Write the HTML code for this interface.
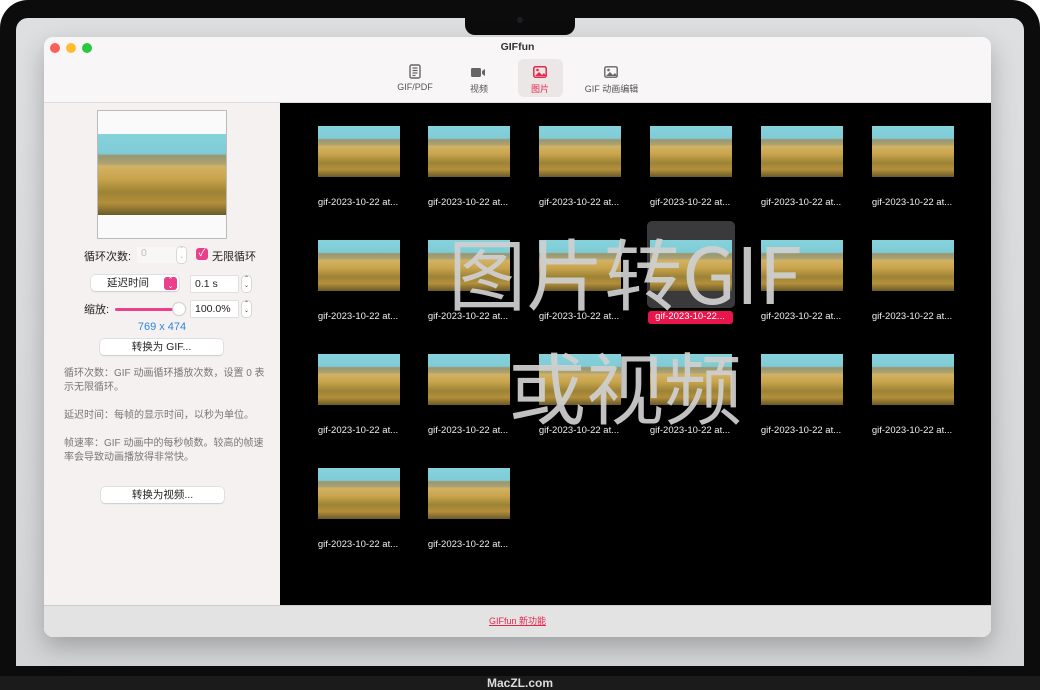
<!DOCTYPE html>
<html><head><meta charset="utf-8"><style>
*{margin:0;padding:0;box-sizing:border-box}
body{width:1040px;height:690px;overflow:hidden;background:#fff;font-family:"Liberation Sans","Noto Sans CJK SC",sans-serif;position:relative}
.a{position:absolute}
.th{position:absolute;width:82px;height:51px;background:linear-gradient(180deg,#86d3dc 0,#7fcbd6 24%,#9a9670 27%,#a9a273 36%,#d2b264 40%,#c9a44c 55%,#9c8336 72%,#b48f3a 85%,#6a5a2a 100%)}
.lb{position:absolute;width:100px;text-align:center;color:#eee;font-size:9.5px}
.btn{position:absolute;background:#fff;border-radius:4px;box-shadow:0 0 0 .5px #ccc,0 1px 1px #ccc;font-size:10.5px;text-align:center;color:#222}
.fld{position:absolute;background:#fff;box-shadow:0 0 0 .5px #ccc;font-size:10.5px;color:#222;padding-left:4px}
.stp{position:absolute;width:9px;height:16px;border-radius:3px;background:#fff;box-shadow:0 0 0 .5px #bbb;font-size:6px;line-height:7px;text-align:center;color:#333}
.big{position:absolute;text-align:center;font-size:78px;line-height:90px;color:#d0d0d0;font-family:'Noto Sans CJK SC',sans-serif;font-weight:400;opacity:.93}
</style></head><body>
<div class="a" style="left:0;top:0;width:1040px;height:690px;background:#0c0c0c;border-radius:28px 28px 0 0"></div>
<div class="a" style="left:16px;top:18px;width:1008px;height:648px;background:linear-gradient(#dedfe1,#d4d5d7);border-radius:12px 12px 0 0"></div>
<div class="a" style="left:465px;top:10px;width:110px;height:25px;background:#0c0c0c;border-radius:0 0 10px 10px"></div>
<div class="a" style="left:517px;top:17px;width:6px;height:6px;border-radius:50%;background:#1d1d25"></div>
<div class="a" style="left:0;top:676px;width:1040px;height:14px;background:#1b1b1b;color:#ddd;font-size:12px;text-align:center;line-height:14px;font-weight:bold">MacZL.com</div>
<!-- window -->
<div class="a" style="left:44px;top:37px;width:947px;height:600px;background:#f8f6f6;border-radius:9px;box-shadow:0 10px 25px rgba(0,0,0,.25);overflow:hidden">
 <div class="a" style="left:6px;top:6px;width:10px;height:10px;border-radius:50%;background:#fe5f57"></div>
 <div class="a" style="left:22px;top:6px;width:10px;height:10px;border-radius:50%;background:#febc2e"></div>
 <div class="a" style="left:38px;top:6px;width:10px;height:10px;border-radius:50%;background:#28c840"></div>
 <div class="a" style="left:0;top:4px;width:947px;text-align:center;font-size:10.5px;font-weight:bold;color:#333">GIFfun</div>
 <div class="a" style="left:474px;top:22px;width:45px;height:38px;background:#ebe7e7;border-radius:6px"></div>
 <svg class="a" style="left:365px;top:27px" width="12" height="15"><rect x="1" y="1" width="10" height="13" rx="1.5" fill="none" stroke="#666" stroke-width="1.4"/><path d="M3.5 4h5M3.5 6.5h5M3.5 9h5M3.5 11.5h3" stroke="#666" stroke-width="1.2"/></svg>
 <svg class="a" style="left:427px;top:30px" width="15" height="11"><rect x="0" y="1" width="10" height="9" rx="1.5" fill="#666"/><path d="M11 4l3-2v7l-3-2z" fill="#666"/></svg>
 <svg class="a" style="left:489px;top:29px" width="14" height="12"><rect x="0.8" y="0.8" width="12.4" height="10.4" rx="1.5" fill="none" stroke="#e8264d" stroke-width="1.5"/><path d="M2 10l4-4 3 3 2-2 2 3z" fill="#e8264d"/><circle cx="4.5" cy="4" r="1.3" fill="#e8264d"/></svg>
 <svg class="a" style="left:560px;top:29px" width="14" height="12"><rect x="0.8" y="0.8" width="12.4" height="10.4" rx="1.5" fill="none" stroke="#666" stroke-width="1.4"/><path d="M2 10l4-4 3 3 2-2 2 3z" fill="#666"/><circle cx="4.5" cy="4" r="1.3" fill="#666"/></svg>
 <div class="a" style="left:346px;top:45px;width:50px;text-align:center;font-size:9px;color:#555">GIF/PDF</div>
 <div class="a" style="left:415px;top:45px;width:40px;text-align:center;font-size:9px;color:#555">视频</div>
 <div class="a" style="left:476px;top:45px;width:40px;text-align:center;font-size:9px;color:#e8264d">图片</div>
 <div class="a" style="left:530px;top:45px;width:75px;text-align:center;font-size:9px;color:#555">GIF 动画编辑</div>
 <div class="a" style="left:0;top:65px;width:947px;height:1px;background:#ddd"></div>
 <div class="a" style="left:0;top:66px;width:236px;height:502px;background:#f5f1f1">
  <div class="a" style="left:53px;top:7px;width:130px;height:129px;border:1px solid #bbb;background:#fafafa"></div>
  <div class="th" style="left:54px;top:31px;width:128px;height:81px"></div>
  <div class="a" style="left:40px;top:145px;font-size:11px;color:#222">循环次数:</div>
  <div class="fld" style="left:93px;top:144px;width:40px;height:16px;color:#bbb;box-shadow:none;background:#f9f6f6">0</div>
  <div class="stp" style="left:133px;top:144px;color:#bbb">⌃<br>⌄</div>
  <div class="a" style="left:152px;top:145px;width:12px;height:12px;border-radius:3px;background:#ea3f8a;color:#fff;font-size:10px;line-height:12px;text-align:center">✓</div>
  <div class="a" style="left:168px;top:145px;font-size:11px;color:#222">无限循环</div>
  <div class="btn" style="left:47px;top:172px;width:88px;height:16px;line-height:16px;text-align:left;padding-left:16px">延迟时间</div>
  <div class="a" style="left:120px;top:174px;width:13px;height:13px;border-radius:3px;background:#ea3f8a;color:#fff;font-size:7px;line-height:6px;text-align:center;padding-top:1px">⌃<br>⌄</div>
  <div class="fld" style="left:147px;top:173px;width:47px;height:16px;line-height:16px">0.1 s</div>
  <div class="stp" style="left:198px;top:173px">⌃<br>⌄</div>
  <div class="a" style="left:40px;top:198px;font-size:11px;color:#222">缩放:</div>
  <div class="a" style="left:71px;top:205px;width:62px;height:3px;border-radius:2px;background:#ea3f8a"></div>
  <div class="a" style="left:129px;top:200px;width:12px;height:12px;border-radius:50%;background:#fff;box-shadow:0 0 1px 1px #ccc"></div>
  <div class="fld" style="left:147px;top:198px;width:47px;height:16px;line-height:16px">100.0%</div>
  <div class="stp" style="left:198px;top:198px">⌃<br>⌄</div>
  <div class="a" style="left:0;top:218px;width:236px;text-align:center;font-size:11px;color:#2a86e0">769 x 474</div>
  <div class="btn" style="left:56px;top:236px;width:123px;height:16px;line-height:16px">转换为 GIF...</div>
  <div class="a" style="left:20px;top:264px;width:208px;font-size:10px;line-height:14px;color:#777">循环次数：GIF 动画循环播放次数，设置 0 表示无限循环。<br><br>延迟时间：每帧的显示时间，以秒为单位。<br><br>帧速率：GIF 动画中的每秒帧数。较高的帧速率会导致动画播放得非常快。</div>
  <div class="btn" style="left:57px;top:384px;width:123px;height:16px;line-height:16px">转换为视频...</div>
 </div>
 <div class="a" style="left:236px;top:66px;width:711px;height:502px;background:#000"></div>
 <div class="a" style="left:0;top:568px;width:947px;height:32px;background:#e3e3e3;border-top:1px solid #ccc;text-align:center;font-size:9px;line-height:30px;color:#e8264d;text-decoration:underline">GIFfun 新功能</div>
</div>
<div class="a" style="left:647px;top:221px;width:88px;height:87px;border-radius:5px;background:#3a3a3c"></div>
<div class="a" style="left:648px;top:311px;width:85px;height:13px;border-radius:3px;background:#e8164a"></div>
<div class="th" style="left:318px;top:126px"></div><div class="th" style="left:428px;top:126px"></div><div class="th" style="left:539px;top:126px"></div><div class="th" style="left:650px;top:126px"></div><div class="th" style="left:761px;top:126px"></div><div class="th" style="left:872px;top:126px"></div>
<div class="th" style="left:318px;top:240px"></div><div class="th" style="left:428px;top:240px"></div><div class="th" style="left:539px;top:240px"></div><div class="th" style="left:650px;top:240px"></div><div class="th" style="left:761px;top:240px"></div><div class="th" style="left:872px;top:240px"></div>
<div class="th" style="left:318px;top:354px"></div><div class="th" style="left:428px;top:354px"></div><div class="th" style="left:539px;top:354px"></div><div class="th" style="left:650px;top:354px"></div><div class="th" style="left:761px;top:354px"></div><div class="th" style="left:872px;top:354px"></div>
<div class="th" style="left:318px;top:468px"></div><div class="th" style="left:428px;top:468px"></div>
<div class="lb" style="left:308px;top:197px">gif-2023-10-22 at...</div><div class="lb" style="left:418px;top:197px">gif-2023-10-22 at...</div><div class="lb" style="left:529px;top:197px">gif-2023-10-22 at...</div><div class="lb" style="left:640px;top:197px">gif-2023-10-22 at...</div><div class="lb" style="left:751px;top:197px">gif-2023-10-22 at...</div><div class="lb" style="left:862px;top:197px">gif-2023-10-22 at...</div>
<div class="lb" style="left:308px;top:311px">gif-2023-10-22 at...</div><div class="lb" style="left:418px;top:311px">gif-2023-10-22 at...</div><div class="lb" style="left:529px;top:311px">gif-2023-10-22 at...</div><div class="lb" style="left:640px;top:311px;color:#fff">gif-2023-10-22...</div><div class="lb" style="left:751px;top:311px">gif-2023-10-22 at...</div><div class="lb" style="left:862px;top:311px">gif-2023-10-22 at...</div>
<div class="lb" style="left:308px;top:425px">gif-2023-10-22 at...</div><div class="lb" style="left:418px;top:425px">gif-2023-10-22 at...</div><div class="lb" style="left:529px;top:425px">gif-2023-10-22 at...</div><div class="lb" style="left:640px;top:425px">gif-2023-10-22 at...</div><div class="lb" style="left:751px;top:425px">gif-2023-10-22 at...</div><div class="lb" style="left:862px;top:425px">gif-2023-10-22 at...</div>
<div class="lb" style="left:308px;top:539px">gif-2023-10-22 at...</div><div class="lb" style="left:418px;top:539px">gif-2023-10-22 at...</div>
<div class="big" style="left:420px;top:226px;width:410px">图片转GIF</div>
<div class="big" style="left:420px;top:340px;width:410px">或视频</div>
</body></html>
